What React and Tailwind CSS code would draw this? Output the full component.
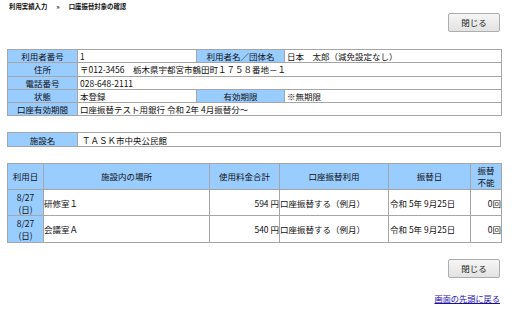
import React from "react";

const lab = "bg-[#99ccff] border border-[#a6a6a6] text-center px-[2px]";
const val = "bg-white border border-[#a6a6a6] px-[2px] text-left";

function CloseButton() {
  return (
    <button className="w-[52px] h-[19px] border border-[#adadad] rounded-[2px] bg-gradient-to-b from-[#f6f6f6] to-[#e2e2e2] text-[8.5px] text-[#222]">
      閉じる
    </button>
  );
}

const rows = [
  { place: "研修室１", fee: "594", use: "口座振替する（例月）", date: "令和 5年 9月25日", ng: "0回" },
  { place: "会議室Ａ", fee: "540", use: "口座振替する（例月）", date: "令和 5年 9月25日", ng: "0回" },
];

export default function App() {
  return (
    <div
      className="w-[512px] h-[318px] bg-white text-[#111] text-[8.5px] overflow-hidden"
      style={{ fontFamily: '"Noto Sans CJK JP", "Noto Sans", sans-serif' }}
    >
      <div className="pl-[9px] pt-[2px] h-[13px] text-[6.4px] font-bold leading-[9px] flex gap-[9px]">
        <span>利用実績入力</span>
        <span>»</span>
        <span>口座振替対象の確認</span>
      </div>

      <div className="flex justify-end pr-[12px]">
        <CloseButton />
      </div>

      <div className="px-[7px] pt-[17px]">
        <table className="w-[494px] table-fixed border-collapse leading-[12px]">
          <colgroup>
            <col className="w-[70px]" />
            <col className="w-[119px]" />
            <col className="w-[88px]" />
            <col className="w-[217px]" />
          </colgroup>
          <tbody>
            <tr className="h-[13.3px]">
              <td className={lab}>利用者番号</td>
              <td className={val}>1</td>
              <td className={lab}>利用者名／団体名</td>
              <td className={val}>日本　太郎（減免設定なし）</td>
            </tr>
            <tr className="h-[13.3px]">
              <td className={lab}>住所</td>
              <td className={val} colSpan={3}>〒012-3456　栃木県宇都宮市鶴田町１７５８番地－１</td>
            </tr>
            <tr className="h-[13.3px]">
              <td className={lab}>電話番号</td>
              <td className={val} colSpan={3}>028-648-2111</td>
            </tr>
            <tr className="h-[13.3px]">
              <td className={lab}>状態</td>
              <td className={val}>本登録</td>
              <td className={lab}>有効期限</td>
              <td className={val}>※無期限</td>
            </tr>
            <tr className="h-[13.3px]">
              <td className={lab}>口座有効期間</td>
              <td className={val} colSpan={3}>口座振替テスト用銀行 令和 2年 4月振替分～</td>
            </tr>
          </tbody>
        </table>

        <table className="w-[494px] table-fixed border-collapse leading-[12px] mt-[16px]">
          <colgroup>
            <col className="w-[70px]" />
            <col />
          </colgroup>
          <tbody>
            <tr className="h-[13.3px]">
              <td className={lab}>施設名</td>
              <td className={val + " pl-[4px]"}>ＴＡＳＫ市中央公民館</td>
            </tr>
          </tbody>
        </table>

        <table className="w-[494px] table-fixed border-collapse leading-[12px] mt-[16px]">
          <colgroup>
            <col className="w-[36px]" />
            <col className="w-[166px]" />
            <col className="w-[70px]" />
            <col className="w-[109px]" />
            <col className="w-[82px]" />
            <col className="w-[31px]" />
          </colgroup>
          <thead>
            <tr className="h-[26px]">
              <th className={lab + " font-normal"}>利用日</th>
              <th className={lab + " font-normal"}>施設内の場所</th>
              <th className={lab + " font-normal"}>使用料金合計</th>
              <th className={lab + " font-normal"}>口座振替利用</th>
              <th className={lab + " font-normal"}>振替日</th>
              <th className={lab + " font-normal"}>振替<br />不能</th>
            </tr>
          </thead>
          <tbody>
            {rows.map((r, i) => (
              <tr key={i} className="h-[26.5px]">
                <td className={lab}>8/27<br />(日)</td>
                <td className="bg-white border border-[#a6a6a6] text-left px-0">{r.place}</td>
                <td className="bg-white border border-[#a6a6a6] text-right pr-0">{r.fee} 円</td>
                <td className="bg-white border border-[#a6a6a6] text-left px-0">{r.use}</td>
                <td className="bg-white border border-[#a6a6a6] text-left pl-[1px]">{r.date}</td>
                <td className="bg-white border border-[#a6a6a6] text-right pr-0">{r.ng}</td>
              </tr>
            ))}
          </tbody>
        </table>
      </div>

      <div className="flex justify-end pr-[12px] mt-[16px]">
        <CloseButton />
      </div>

      <div className="flex justify-end pr-[12px] mt-[15px]">
        <a href="#top" className="text-[8.2px] text-[#1a0dab] underline leading-[10px]">画面の先頭に戻る</a>
      </div>
    </div>
  );
}
